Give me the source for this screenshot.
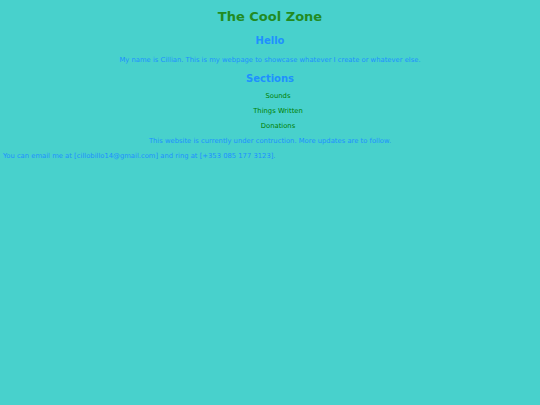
export default function App() {
    const sections = ["Sounds", "Things Written", "Donations"];

    return (
        <div className="min-h-[405px] w-full bg-[#48d1cc] font-['DejaVu_Sans',Verdana,sans-serif] overflow-hidden">
            <div className="px-[3px] pt-[9px]">
                <h1 className="text-center text-[13px] leading-[15px] font-bold text-[#228b22]">
                    The Cool Zone
                </h1>
                <h2 className="mt-[11px] text-center text-[10px] leading-[12px] font-bold text-[#1e90ff]">
                    Hello
                </h2>
                <p className="mt-[9px] text-center text-[6.8px] leading-[8px] text-[#1e90ff]">
                    My name is Cillian. This is my webpage to showcase whatever I create or whatever else.
                </p>
                <h2 className="mt-[9px] text-center text-[10px] leading-[12px] font-bold text-[#1e90ff]">
                    Sections
                </h2>
                {/* list keeps its indent, so it sits a bit right of centre */}
                <ul className="mt-[2px] pl-[16px]">
                    {sections.map((s) => (
                        <li key={s} className="mt-[7px] text-center text-[6.8px] leading-[8px] text-[#008000]">
                            {s}
                        </li>
                    ))}
                </ul>
                <p className="mt-[7px] text-center text-[6.8px] leading-[8px] text-[#1e90ff]">
                    This website is currently under contruction. More updates are to follow.
                </p>
                <p className="mt-[7px] text-[6.8px] leading-[8px] text-[#1e90ff]">
                    You can email me at [cillobillo14@gmail.com] and ring at [+353 085 177 3123].
                </p>
            </div>
        </div>
    );
}
